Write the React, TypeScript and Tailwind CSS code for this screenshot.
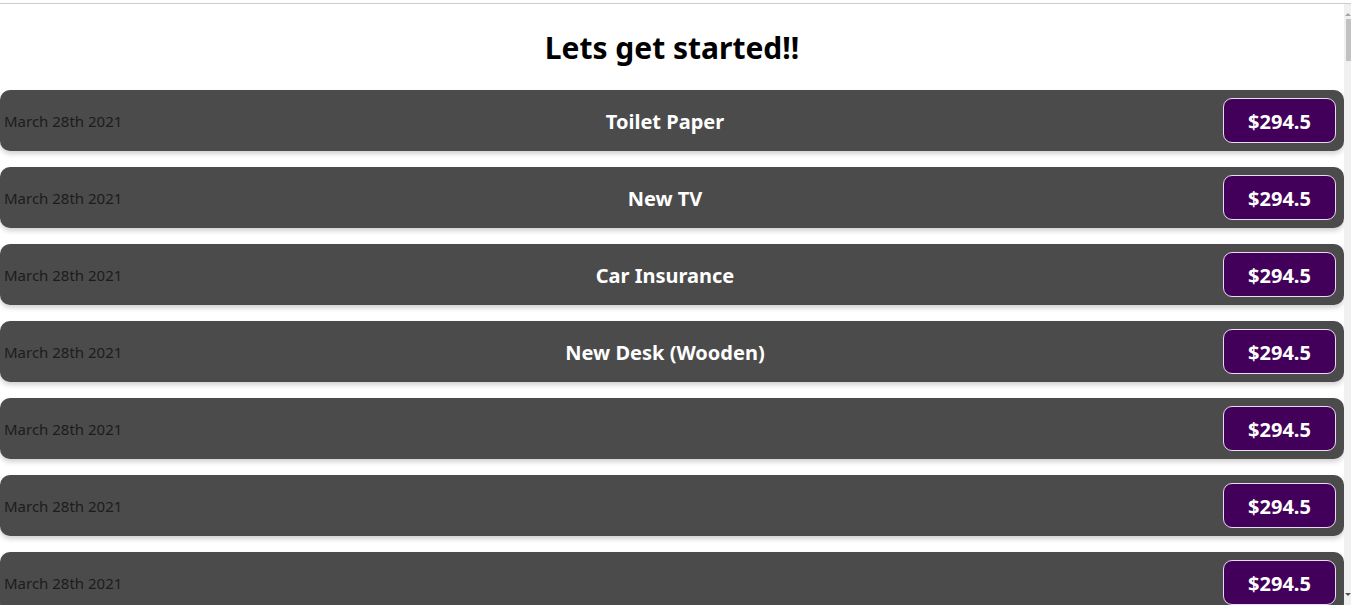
const expenses = [
  { date: 'March 28th 2021', name: 'Toilet Paper', amount: 294.5 },
  { date: 'March 28th 2021', name: 'New TV', amount: 294.5 },
  { date: 'March 28th 2021', name: 'Car Insurance', amount: 294.5 },
  { date: 'March 28th 2021', name: 'New Desk (Wooden)', amount: 294.5 },
  { date: 'March 28th 2021', name: '', amount: 294.5 },
  { date: 'March 28th 2021', name: '', amount: 294.5 },
  { date: 'March 28th 2021', name: '', amount: 294.5 },
];

function ExpenseItem({ date, name, amount }: { date: string; name: string; amount: number }) {
  return (
    <div className="flex items-center shrink-0 h-[61px] pl-1 pr-2 bg-[#4b4b4b] rounded-[10px] shadow-[0_3px_5px_rgba(0,0,0,0.18)]">
      {/* Date */}
      <div className="flex-1 pt-[2px] text-[15px] text-[#1c1c1c]">{date}</div>

      {/* Title */}
      <h2 className="pt-[2px] pr-[10px] text-[20px] font-bold text-white">{name}</h2>

      {/* Price */}
      <div className="flex-1 flex justify-end">
        <div className="flex items-center justify-center w-[113px] h-[45px] pt-[2px] bg-[#42005a] border border-[#e8dcef] rounded-[9px] text-[20px] font-bold text-white">
          ${amount}
        </div>
      </div>
    </div>
  );
}

export default function App() {
  return (
    <div className="flex flex-col h-screen overflow-hidden bg-white" style={{ fontFamily: '"Noto Sans", sans-serif' }}>
      <div className="h-[3px] shrink-0" />
      <div className="flex flex-1 min-h-0 border-t border-[#cdcdcd]">
        {/* Page */}
        <div className="flex-1 min-w-0">
          <h1 className="pt-[26px] mb-6 text-center text-[30px] leading-[36px] font-bold text-black">
            Lets get started!!
          </h1>

          <div className="flex flex-col gap-4">
            {expenses.map((item, i) => (
              <ExpenseItem key={i} date={item.date} name={item.name} amount={item.amount} />
            ))}
          </div>
        </div>

        {/* Scrollbar */}
        <div className="flex flex-col w-[7px] bg-[#f0f0f0]">
          <div className="h-[7px] mt-[7px] flex justify-end">
            <div className="w-0 h-0 mt-[2px] border-l-[3px] border-r-[3px] border-b-[3px] border-l-transparent border-r-transparent border-b-[#a3a3a3]" />
          </div>
          <div className="ml-[2px] mt-[1px] h-[42px] bg-[#c1c1c1]" />
          <div className="flex-1" />
          <div className="h-[7px] mb-[5px] flex justify-end">
            <div className="w-0 h-0 border-l-[3px] border-r-[3px] border-t-[3px] border-l-transparent border-r-transparent border-t-[#505050]" />
          </div>
        </div>
      </div>
    </div>
  );
}
